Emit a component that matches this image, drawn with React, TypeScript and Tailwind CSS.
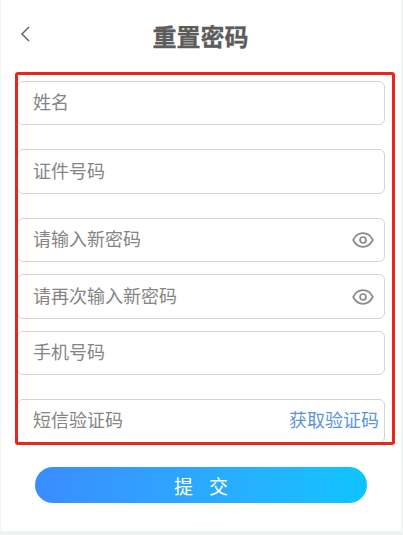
import React from "react";

const font = "font-['Noto_Sans_CJK_SC','Noto_Sans',sans-serif]";

function EyeIcon() {
  return (
    <svg width="22" height="16" viewBox="0 0 22 16" fill="none" stroke="#8a8a8a" strokeWidth="1.7">
      <path d="M1.2 8C3.4 3.6 6.9 1.2 11 1.2S18.6 3.6 20.8 8C18.6 12.4 15.1 14.8 11 14.8S3.4 12.4 1.2 8Z" />
      <circle cx="11" cy="8" r="3" />
    </svg>
  );
}

function Field({
  label,
  className,
  eye,
  action,
}: {
  label: string;
  className: string;
  eye?: boolean;
  action?: string;
}) {
  return (
    <div
      className={`flex items-center justify-between ml-[16px] w-[368px] border border-[#d4d4d6] rounded-[6px] bg-white pl-[15px] ${className}`}
    >
      <span className="text-[18px] leading-[24px] text-[#858585] -translate-y-[2px]">{label}</span>
      {eye && (
        <span className="flex mr-[10px]">
          <EyeIcon />
        </span>
      )}
      {action && <span className="text-[18px] leading-[24px] text-[#5b96d6] mr-[5px] -translate-y-[2px]">{action}</span>}
    </div>
  );
}

export default function App() {
  return (
    <div className={`h-[535px] w-[403px] bg-[#f1f2f2] pl-[1px] pr-[2px] pb-[4px] overflow-hidden ${font}`}>
      <div className="relative h-full bg-white">
        <header className="relative flex items-center justify-center h-[72px]">
          <svg
            className="absolute left-[19px] top-[26px]"
            width="12"
            height="16"
            viewBox="0 0 12 16"
            fill="none"
            stroke="#666666"
            strokeWidth="1.5"
          >
            <path d="M9 1L2 8L9 15" />
          </svg>
          <h1 className="text-[24px] leading-[32px] font-bold text-[#5c5c5c] -translate-y-[0.5px] -ml-[1px] [-webkit-text-stroke:0.3px_#5c5c5c]">重置密码</h1>
        </header>

        <form className="relative flex flex-col pt-[9px] h-[373px]">
          <Field label="姓名" className="h-[44px] shrink-0" />
          <Field label="证件号码" className="h-[45px] mt-[24px] shrink-0" />
          <Field label="请输入新密码" eye className="h-[44px] mt-[24px] shrink-0" />
          <Field label="请再次输入新密码" eye className="h-[45px] mt-[12px] shrink-0" />
          <Field label="手机号码" className="h-[44px] mt-[12px] shrink-0" />
          <Field label="短信验证码" action="获取验证码" className="h-[44px] mt-[24px] shrink-0" />
          <div className="absolute left-[14px] top-0 w-[380px] h-[373px] border-[3px] border-[#e8261c] rounded-[3px] pointer-events-none" />
        </form>

        <button
          type="button"
          className="block ml-[34px] mt-[22px] w-[332px] h-[36px] rounded-full bg-gradient-to-r from-[#3a8cff] to-[#0cc4ff] text-white text-[19px] leading-[24px] tracking-[16px] indent-[16px]"
        >
          <span className="relative top-[1px]">提交</span>
        </button>
      </div>
    </div>
  );
}
